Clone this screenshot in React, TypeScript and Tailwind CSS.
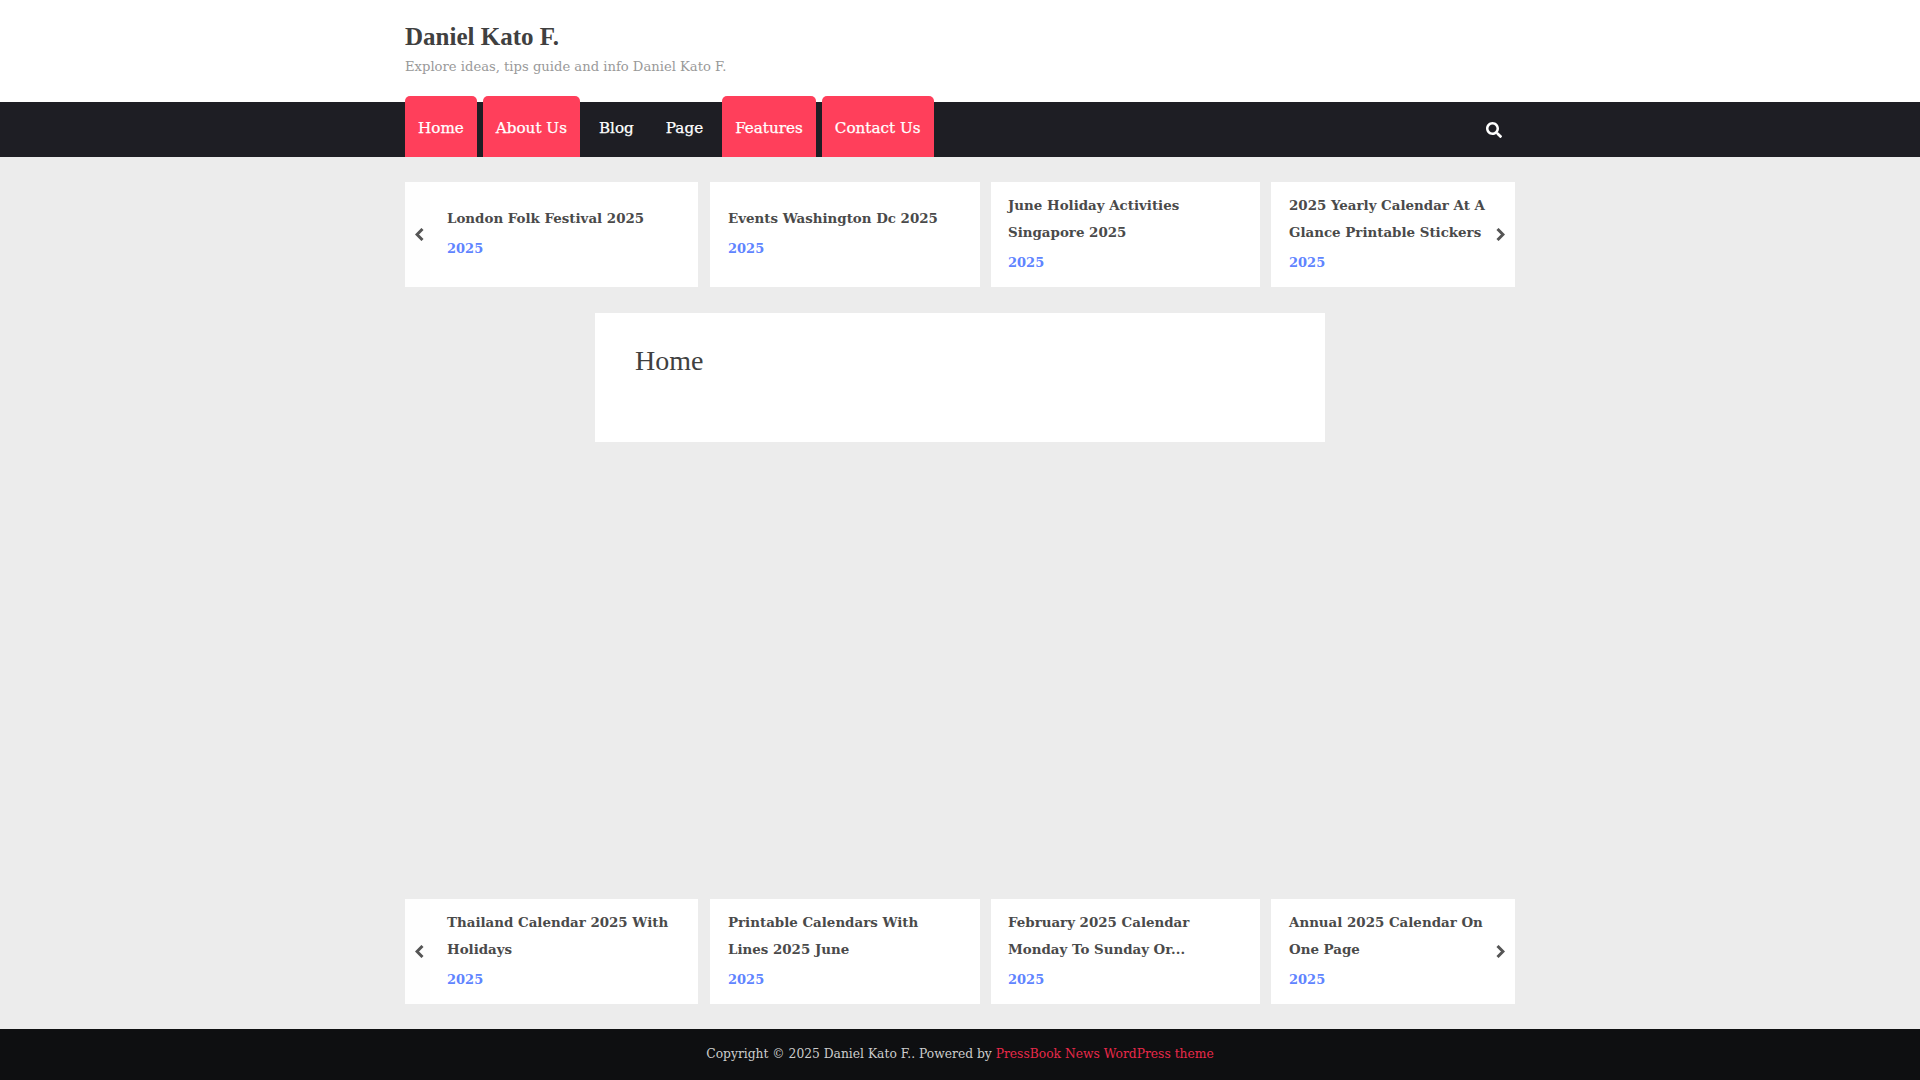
import { FaSearch } from "react-icons/fa";

const topRow = [
  { title: ["London Folk Festival 2025"], width: "w-[293px] mr-[12px]", pad: "pl-[42px]" },
  { title: ["Events Washington Dc 2025"], width: "w-[270px] mr-[11px]", pad: "pl-[18px]" },
  { title: ["June Holiday Activities", "Singapore 2025"], width: "w-[269px] mr-[11px]", pad: "pl-[17px]" },
  { title: ["2025 Yearly Calendar At A", "Glance Printable Stickers"], width: "w-[244px]", pad: "pl-[18px]" },
];

const bottomRow = [
  { title: ["Thailand Calendar 2025 With", "Holidays"], width: "w-[293px] mr-[12px]", pad: "pl-[42px]" },
  { title: ["Printable Calendars With", "Lines 2025 June"], width: "w-[270px] mr-[11px]", pad: "pl-[18px]" },
  { title: ["February 2025 Calendar", "Monday To Sunday Or..."], width: "w-[269px] mr-[11px]", pad: "pl-[17px]" },
  { title: ["Annual 2025 Calendar On", "One Page"], width: "w-[244px]", pad: "pl-[18px]" },
];

const navItems = [
  { name: "Home", active: true },
  { name: "About Us", active: true },
  { name: "Blog", active: false },
  { name: "Page", active: false },
  { name: "Features", active: true },
  { name: "Contact Us", active: true },
];

function Carousel({ items }: { items: typeof topRow }) {
  return (
    <div className="relative flex w-[1110px] mx-auto font-['DejaVu_Serif',serif]">
      {items.map((item, index) => (
        <div
          key={index}
          className={`${item.width} ${item.pad} h-[105px] bg-white flex flex-col justify-center pb-[5px] shrink-0`}
        >
          {item.title.map((line) => (
            <div key={line} className="text-[13.4px] font-bold text-[#4a4a4a] leading-[27px] whitespace-nowrap">
              {line}
            </div>
          ))}
          <div className="mt-[6px] text-[13px] font-bold leading-[21px] text-[#5f84ff]">2025</div>
        </div>
      ))}
      {/* slider arrows sit over the cards */}
      <div className="absolute left-0 top-0 h-full w-[25px] bg-[#fefefe] flex items-center pl-[10px]">
        <svg width="9" height="13" viewBox="0 0 9 13" fill="none" stroke="#555" strokeWidth="3">
          <path d="M7.5 1 L2 6.5 L7.5 12" />
        </svg>
      </div>
      <div className="absolute right-0 top-0 h-full w-[25px] flex items-center pl-[6px]">
        <svg width="9" height="13" viewBox="0 0 9 13" fill="none" stroke="#555" strokeWidth="3">
          <path d="M1.5 1 L7 6.5 L1.5 12" />
        </svg>
      </div>
    </div>
  );
}

export default function App() {
  return (
    <div className="min-h-screen flex flex-col bg-[#ececec] font-['DejaVu_Serif',serif]">
      <header className="bg-white h-[102px]">
        <div className="w-[1110px] mx-auto pt-[23px]">
          <div className="font-['Liberation_Serif',serif] text-[25px] leading-[28px] font-bold text-[#404040]">
            Daniel Kato F.
          </div>
          <div className="mt-[6px] text-[13.15px] leading-[20px] text-[#999]">
            Explore ideas, tips guide and info Daniel Kato F.
          </div>
        </div>
      </header>

      <nav className="bg-[#1e1e24] h-[55px]">
        <div className="w-[1110px] mx-auto flex items-start relative">
          <div className="flex gap-[6px] -mt-[6px]">
            {navItems.map((item) => (
              <a
                key={item.name}
                className={`h-[61px] px-[13px] pt-[3px] flex items-center text-white text-[15.2px] [-webkit-text-stroke:0.25px_white] rounded-t-[5px] ${
                  item.active ? "bg-[#ff3f5b]" : ""
                }`}
              >
                {item.name}
              </a>
            ))}
          </div>
          <div className="ml-auto mr-[13px] mt-[20px] text-white">
            <FaSearch className="w-[16px] h-[16px]" />
          </div>
        </div>
      </nav>

      <main className="flex-1 pt-[25px]">
        <Carousel items={topRow} />
        <div className="w-[730px] h-[129px] bg-white mx-auto mt-[26px] px-[40px] pt-[32px]">
          <h1 className="font-['Liberation_Serif',serif] text-[28px] leading-[32px] font-medium text-[#404040]">
            Home
          </h1>
        </div>
        <div className="mt-[457px]">
          <Carousel items={bottomRow} />
        </div>
      </main>

      <footer className="bg-[#0e0f11] h-[51px] flex items-center justify-center text-[12.3px] text-[#ccc]">
        Copyright © 2025 Daniel Kato F.. Powered by&nbsp;
        <a className="text-[#e8294a]">PressBook News WordPress theme</a>
      </footer>
    </div>
  );
}
